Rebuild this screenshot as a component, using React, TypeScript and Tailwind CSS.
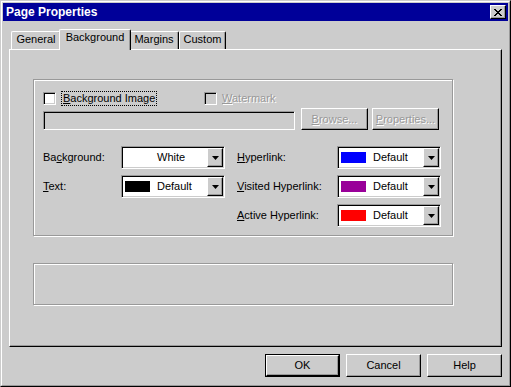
import React from "react";

const raised =
  "border border-t-white border-l-white border-r-black border-b-black shadow-[inset_-1px_-1px_0_#999]";
const sunken =
  "border border-t-[#999] border-l-[#999] border-r-white border-b-white shadow-[inset_1px_1px_0_#000,inset_-1px_-1px_0_#ccc]";
const etched = "border border-[#999] shadow-[1px_1px_0_#fff,inset_1px_1px_0_#fff]";
const disabledText = "text-[#999] [text-shadow:1px_1px_0_#fff]";

function U({ children }: { children: React.ReactNode }) {
  return <span className="underline decoration-1 underline-offset-[1px]">{children}</span>;
}

function Arrow() {
  return (
    <svg width="7" height="4" viewBox="0 0 7 4">
      <polygon points="0,0 7,0 3.5,4" fill="#000" />
    </svg>
  );
}

function Select({ color, label }: { color: string; label: string }) {
  return (
    <div className={`flex h-[23px] w-[104px] bg-white p-[1px] ${sunken}`}>
      <div className="flex flex-1 items-center pl-[2px]">
        <div className="h-[11px] w-[25px]" style={{ background: color }} />
        <span className="ml-[7px]">{label}</span>
      </div>
      <div className={`flex w-[16px] items-center justify-center bg-[#ccc] ${raised}`}>
        <Arrow />
      </div>
    </div>
  );
}

function Checkbox({ disabled }: { disabled?: boolean }) {
  return (
    <div
      className={`h-[13px] w-[13px] shrink-0 ${sunken} ${disabled ? "bg-[#ccc]" : "bg-white"}`}
    />
  );
}

function Button({ children, disabled, def }: { children: React.ReactNode; disabled?: boolean; def?: boolean }) {
  const inner = (
    <div
      className={`flex h-full w-full items-center justify-center bg-[#ccc] ${raised} ${disabled ? disabledText : ""}`}
    >
      {children}
    </div>
  );
  if (def) {
    return <div className="h-[23px] w-[75px] border border-black">{inner}</div>;
  }
  return <div className="h-[23px] w-[75px]">{inner}</div>;
}

function Tab({ label, w, selected }: { label: string; w: number; selected?: boolean }) {
  if (selected) {
    return (
      <div
        className="relative z-10 -mx-[2px] mb-[-1px] flex h-[21px] items-start justify-center rounded-t-[2px] border-l border-t border-r border-l-white border-t-white border-r-black bg-[#ccc] pt-[2px] shadow-[inset_-1px_0_0_#999]"
        style={{ width: w + 4 }}
      >
        {label}
      </div>
    );
  }
  return (
    <div
      className="flex h-[18px] items-start justify-center rounded-t-[2px] border-l border-t border-r border-l-white border-t-white border-r-black bg-[#ccc] pt-[2px] shadow-[inset_-1px_0_0_#999]"
      style={{ width: w }}
    >
      {label}
    </div>
  );
}

export default function App() {
  return (
    <div
      className="h-[387px] w-[511px] bg-[#ccc] text-[11px] leading-none text-black"
      style={{ fontFamily: '"Liberation Sans", Arial, sans-serif' }}
    >
      <div className="h-full w-full border border-t-[#ccc] border-l-[#ccc] border-r-black border-b-black">
        <div className="flex h-full w-full flex-col border border-t-white border-l-white border-r-[#999] border-b-[#999] p-[1px]">
          {/* Title bar */}
          <div className="flex h-[18px] items-center justify-between bg-[#000099] pl-[3px] pr-[2px]">
            <span className="text-[12px] font-bold text-white">Page Properties</span>
            <div className={`flex h-[14px] w-[16px] items-center justify-center bg-[#ccc] ${raised}`}>
              <svg width="8" height="7" viewBox="0 0 8 7">
                <path
                  d="M0 0h2v1h1v1h2v-1h1v-1h2v1h-1v1h-1v1h-1v1h1v1h1v1h1v1h-2v-1h-1v-1h-2v1h-1v1h-2v-1h1v-1h1v-1h1v-1h-1v-1h-1v-1h-1z"
                  fill="#000"
                />
              </svg>
            </div>
          </div>

          {/* Tabs */}
          <div className="mx-[6px] mt-[8px] flex h-[20px] items-end pl-[2px]">
            <Tab label="General" w={50} />
            <Tab label="Background" w={68} selected />
            <Tab label="Margins" w={50} />
            <Tab label="Custom" w={47} />
          </div>

          {/* Panel */}
          <div className="mx-[6px] flex h-[298px] flex-col border border-t-white border-l-white border-r-black border-b-black pl-[23px] pt-[29px] shadow-[inset_-1px_-1px_0_#999]">
            <div className={`flex h-[157px] w-[420px] flex-col pl-[9px] pt-[12px] ${etched}`}>
              {/* checkbox row */}
              <div className="flex h-[13px] items-center">
                <div className="flex w-[161px] items-center">
                  <Checkbox />
                  <span className="ml-[5px] border border-dotted border-black px-[1px] py-[1px]">
                    <U>B</U>ackground Image
                  </span>
                </div>
                <div className="flex items-center">
                  <Checkbox disabled />
                  <span className={`ml-[5px] ${disabledText}`}>
                    <U>W</U>atermark
                  </span>
                </div>
              </div>
              {/* input row */}
              <div className="mt-[3px] flex h-[22px] items-end">
                <div className={`h-[19px] w-[252px] bg-[#ccc] ${sunken}`} />
                <div className="ml-[6px] h-[22px] w-[67px]">
                  <div className={`flex h-full w-full items-center justify-center bg-[#ccc] ${raised} ${disabledText}`}>
                    <span>
                      <U>B</U>rowse...
                    </span>
                  </div>
                </div>
                <div className="ml-[4px] h-[22px] w-[67px]">
                  <div className={`flex h-full w-full items-center justify-center bg-[#ccc] ${raised} ${disabledText}`}>
                    <span>
                      <U>P</U>roperties...
                    </span>
                  </div>
                </div>
              </div>
              {/* selects */}
              <div className="mt-[16px] flex">
                <div className="flex w-[194px] flex-col gap-[6px]">
                  <div className="flex items-center">
                    <span className="w-[78px]">
                      Ba<U>c</U>kground:
                    </span>
                    <Select color="#ffffff" label="White" />
                  </div>
                  <div className="flex items-center">
                    <span className="w-[78px]">
                      <U>T</U>ext:
                    </span>
                    <Select color="#000000" label="Default" />
                  </div>
                </div>
                <div className="flex flex-col gap-[6px]">
                  <div className="flex items-center">
                    <span className="w-[100px]">
                      <U>H</U>yperlink:
                    </span>
                    <Select color="#0000ff" label="Default" />
                  </div>
                  <div className="flex items-center">
                    <span className="w-[100px]">
                      <U>V</U>isited Hyperlink:
                    </span>
                    <Select color="#990099" label="Default" />
                  </div>
                  <div className="flex items-center">
                    <span className="w-[100px]">
                      <U>A</U>ctive Hyperlink:
                    </span>
                    <Select color="#ff0000" label="Default" />
                  </div>
                </div>
              </div>
            </div>
            <div className={`mt-[27px] h-[42px] w-[420px] ${etched}`} />
          </div>

          {/* Buttons */}
          <div className="mx-[6px] mt-[7px] flex justify-end gap-[6px]">
            <Button def>OK</Button>
            <Button>Cancel</Button>
            <Button>Help</Button>
          </div>
        </div>
      </div>
    </div>
  );
}
